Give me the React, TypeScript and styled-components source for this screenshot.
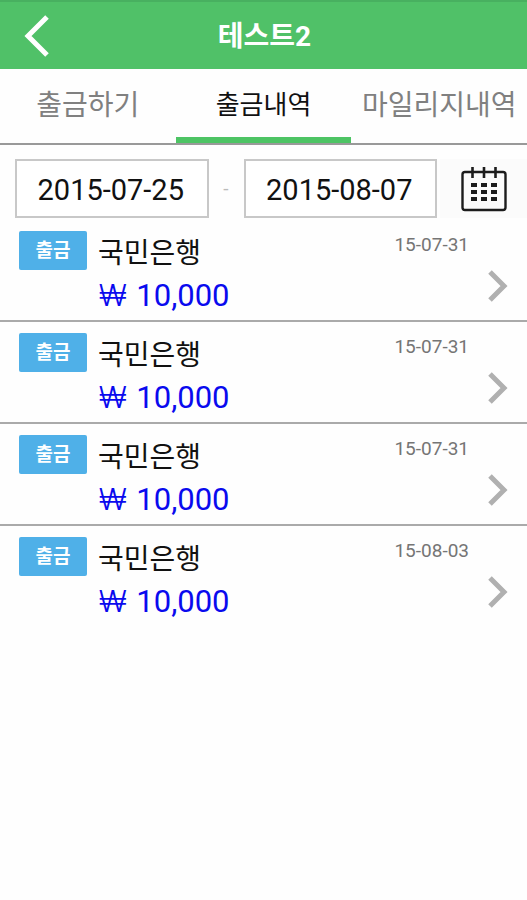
import React, { useState } from "react";
import styled, { createGlobalStyle } from "styled-components";

const GlobalStyle = createGlobalStyle`
  * { box-sizing: border-box; }
  body {
    margin: 0;
    background: #fefefe;
    color: #111;
    font-family: Roboto, "Noto Sans CJK KR", sans-serif;
  }
  button, input { font: inherit; color: inherit; }
  button { padding: 0; border: 0; background: none; cursor: pointer; }
`;

const Header = styled.header`
  display: grid;
  grid-template-columns: 72px 1fr 72px;
  align-items: center;
  height: 69px;
  background: #50c168;
  border-top: 2px solid #48b060;
  color: #fff;
`;

const BackButton = styled.button`
  display: flex;
  align-items: center;
  justify-content: center;
  height: 67px;
`;

const Title = styled.h1`
  margin: 0;
  padding: 3px 0 0 2px;
  text-align: center;
  font-size: 28px;
  line-height: 40px;
  font-weight: 700;
`;

const Tabs = styled.nav`
  display: grid;
  grid-template-columns: repeat(3, 1fr);
  border-bottom: 2px solid #999;
`;

const Tab = styled.button<{ $active: boolean }>`
  height: 74px;
  padding-top: ${(p) => (p.$active ? 4 : 6)}px;
  border-bottom: 6px solid ${(p) => (p.$active ? "#4dc464" : "transparent")};
  color: ${(p) => (p.$active ? "#111" : "#808080")};
  font-size: ${(p) => (p.$active ? 26 : 28)}px;
  line-height: 40px;
  white-space: nowrap;
`;

const Filter = styled.form`
  display: flex;
  align-items: center;
  padding: 14px 0 2px 15px;
`;

const DateInput = styled.input`
  flex: 1;
  min-width: 0;
  height: 59px;
  padding: 2px 2px 0 0;
  border: 2px solid #c8c8c8;
  border-radius: 0;
  background: #fff;
  text-align: center;
  font-size: 29px;
`;

const Dash = styled.span`
  width: 35px;
  text-align: center;
  color: #bbb;
  font-size: 19px;
`;

const CalendarButton = styled.button`
  display: flex;
  align-items: center;
  justify-content: center;
  width: 87px;
  height: 59px;
  margin-left: 3px;
  background: #fbfbfb;
`;

const List = styled.ul`
  margin: 0;
  padding: 0;
  list-style: none;
`;

const Item = styled.li`
  border-bottom: 2px solid #aaa;
  &:last-child { border-bottom: 0; }
`;

const Row = styled.button`
  display: grid;
  grid-template-columns: 68px 1fr auto;
  column-gap: 11px;
  width: 100%;
  height: 100px;
  padding: 11px 19px 0;
  align-items: start;
  text-align: left;
`;

const Badge = styled.span`
  height: 39px;
  border-radius: 2px;
  background: #4fb0e8;
  color: #fff;
  text-align: center;
  font-size: 19px;
  line-height: 40px;
  font-weight: 700;
`;

const Details = styled.span`
  display: flex;
  flex-direction: column;
`;

const Bank = styled.span`
  padding-top: 2px;
  font-size: 28px;
  line-height: 42px;
`;

const Amount = styled.span`
  padding-left: 1px;
  color: #0a0aee;
  font-size: 31px;
  line-height: 40px;
`;

const Won = styled.span`
  margin-right: 2px;
  font-family: Inter, sans-serif;
  font-size: 30px;
  font-weight: 300;
`;

const Side = styled.span`
  display: flex;
  flex-direction: column;
  align-items: flex-end;
  gap: 11px;
`;

const Day = styled.span`
  margin-right: 39px;
  color: #757575;
  font-size: 19px;
  line-height: 28px;
`;

const BackIcon = () => (
  <svg width="26" height="44" viewBox="0 0 26 44" fill="none" aria-hidden="true">
    <path d="M24 3 5 22 24 41" stroke="#fff" strokeWidth="5" />
  </svg>
);

const ChevronIcon = () => (
  <svg width="20" height="32" viewBox="0 0 20 32" fill="none" aria-hidden="true">
    <path d="M2 2 16 16 2 30" stroke="#b0b0b0" strokeWidth="5" />
  </svg>
);

const CalendarIcon = () => (
  <svg width="46" height="46" viewBox="0 0 46 46" aria-hidden="true">
    <rect x="1.5" y="6" width="43" height="38" rx="2.5" fill="none" stroke="#1c1c1c" strokeWidth="2.4" />
    <path d="M11.500 1v11M23 1v11M34.500 1v11" stroke="#1c1c1c" strokeWidth="2.6" />
    {[17, 24, 31].map((y) =>
      [10, 20, 30].map((x) => (
        <rect key={`${x}-${y}`} x={x} y={y} width="6" height="4" fill="#1c1c1c" />
      ))
    )}
  </svg>
);

const tabs = ["출금하기", "출금내역", "마일리지내역"];
const days = ["15-07-31", "15-07-31", "15-07-31", "15-08-03"];

export default function App() {
  const [active, setActive] = useState(1);
  const [from, setFrom] = useState("2015-07-25");
  const [to, setTo] = useState("2015-08-07");

  return (
    <>
      <GlobalStyle />
      <Header>
        <BackButton aria-label="뒤로">
          <BackIcon />
        </BackButton>
        <Title>테스트2</Title>
      </Header>
      <Tabs>
        {tabs.map((label, i) => (
          <Tab key={label} $active={i === active} onClick={() => setActive(i)}>
            {label}
          </Tab>
        ))}
      </Tabs>
      <main>
        <Filter onSubmit={(e) => e.preventDefault()}>
          <DateInput aria-label="시작일" value={from} onChange={(e) => setFrom(e.target.value)} />
          <Dash>-</Dash>
          <DateInput aria-label="종료일" value={to} onChange={(e) => setTo(e.target.value)} />
          <CalendarButton type="button" aria-label="달력">
            <CalendarIcon />
          </CalendarButton>
        </Filter>
        <List>
          {days.map((day, i) => (
            <Item key={i}>
              <Row>
                <Badge>출금</Badge>
                <Details>
                  <Bank>국민은행</Bank>
                  <Amount>
                    <Won>₩</Won> 10,000
                  </Amount>
                </Details>
                <Side>
                  <Day>{day}</Day>
                  <ChevronIcon />
                </Side>
              </Row>
            </Item>
          ))}
        </List>
      </main>
    </>
  );
}
